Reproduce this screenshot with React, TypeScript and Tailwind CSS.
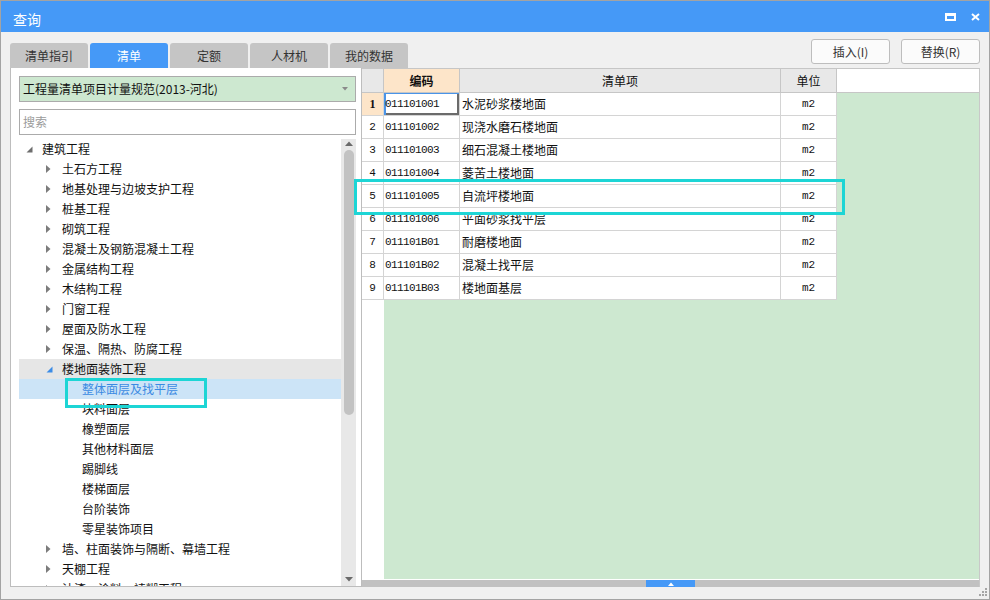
import React from "react";

const CJK = '"Noto Sans CJK SC", "Liberation Sans", sans-serif';
const MONO = '"Liberation Mono", "Noto Sans CJK SC", monospace';

type Node = { l: number; t: string; s?: "exp" | "col" | "expBlue"; sel?: boolean; hover?: boolean };

const tree: Node[] = [
  { l: 0, t: "建筑工程", s: "exp" },
  { l: 1, t: "土石方工程", s: "col" },
  { l: 1, t: "地基处理与边坡支护工程", s: "col" },
  { l: 1, t: "桩基工程", s: "col" },
  { l: 1, t: "砌筑工程", s: "col" },
  { l: 1, t: "混凝土及钢筋混凝土工程", s: "col" },
  { l: 1, t: "金属结构工程", s: "col" },
  { l: 1, t: "木结构工程", s: "col" },
  { l: 1, t: "门窗工程", s: "col" },
  { l: 1, t: "屋面及防水工程", s: "col" },
  { l: 1, t: "保温、隔热、防腐工程", s: "col" },
  { l: 1, t: "楼地面装饰工程", s: "expBlue", hover: true },
  { l: 2, t: "整体面层及找平层", sel: true },
  { l: 2, t: "块料面层" },
  { l: 2, t: "橡塑面层" },
  { l: 2, t: "其他材料面层" },
  { l: 2, t: "踢脚线" },
  { l: 2, t: "楼梯面层" },
  { l: 2, t: "台阶装饰" },
  { l: 2, t: "零星装饰项目" },
  { l: 1, t: "墙、柱面装饰与隔断、幕墙工程", s: "col" },
  { l: 1, t: "天棚工程", s: "col" },
  { l: 1, t: "油漆、涂料、裱糊工程", s: "col" },
];

const rows = [
  ["1", "011101001", "水泥砂浆楼地面"],
  ["2", "011101002", "现浇水磨石楼地面"],
  ["3", "011101003", "细石混凝土楼地面"],
  ["4", "011101004", "菱苦土楼地面"],
  ["5", "011101005", "自流坪楼地面"],
  ["6", "011101006", "平面砂浆找平层"],
  ["7", "011101B01", "耐磨楼地面"],
  ["8", "011101B02", "混凝土找平层"],
  ["9", "011101B03", "楼地面基层"],
];

function Tri({ s }: { s?: Node["s"] }) {
  if (s === "col")
    return (
      <svg width="5" height="8" viewBox="0 0 5 8" className="block">
        <path d="M0 0 L4.5 4 L0 8 Z" fill="#7c7c7c" />
      </svg>
    );
  if (s === "exp" || s === "expBlue")
    return (
      <svg width="7" height="7" viewBox="0 0 7 7" className="block mt-[1px]">
        <path d="M6.5 0.5 L6.5 6.5 L0.5 6.5 Z" fill={s === "exp" ? "#6e6e6e" : "#3c8ce6"} />
      </svg>
    );
  return null;
}

export default function App() {
  const tabs = ["清单指引", "清单", "定额", "人材机", "我的数据"];
  return (
    <div
      className="relative w-[990px] h-[600px] border border-[#a3a3a3] bg-[#f0f0f0] flex flex-col overflow-hidden"
      style={{ fontFamily: CJK }}
    >
      {/* title bar */}
      <div className="h-[31px] shrink-0 bg-[#4599f7] flex items-center pl-[12px] pr-[9px] text-white">
        <span className="text-[14px] leading-none mt-[4px]">查询</span>
        <div className="ml-auto flex items-center gap-[15px] mt-[1px]">
          <div className="w-[11px] h-[8px] border-2 border-t-[3px] border-white" />
          <svg width="9" height="8" viewBox="0 0 9 8" className="block">
            <path d="M1 1 L8 7 M8 1 L1 7" stroke="#fff" strokeWidth="2" />
          </svg>
        </div>
      </div>

      {/* tabs row */}
      <div className="h-[36px] shrink-0 flex items-end pl-[9px] pr-[9px]">
        <div className="flex gap-[2px]">
          {tabs.map((t, i) => (
            <div
              key={t}
              className={
                "w-[78px] h-[25px] rounded-t-[3px] flex items-center justify-center text-[12px] " +
                (i === 1 ? "bg-[#4599f7] text-white" : "bg-[#c5c5c5] text-[#333]")
              }
            >
              {t}
            </div>
          ))}
        </div>
        <div className="ml-auto self-start mt-[7px] flex gap-[11px]">
          {["插入(I)", "替换(R)"].map((b) => (
            <div
              key={b}
              className="w-[79px] h-[25px] rounded-[3px] border border-[#bdbdbd] bg-[#fbfbfb] flex items-center justify-center text-[12px] text-[#333]"
            >
              {b}
            </div>
          ))}
        </div>
      </div>

      {/* content */}
      <div className="h-[519px] shrink-0 flex pl-[9px]">
        {/* left panel */}
        <div className="w-[352px] h-full bg-white border-l border-r border-b border-[#bdbdbd] flex flex-col pt-[8px] pl-[8px] pr-[5px]">
          <div className="h-[26px] shrink-0 border border-[#ababab] bg-[#cde8d0] flex items-center pl-[3px] pr-[7px] text-[12px] text-[#111]">
            <span>工程量清单项目计量规范(2013-河北)</span>
            <svg width="6" height="4" viewBox="0 0 6 4" className="ml-auto block">
              <path d="M0 0 L6 0 L3 3.5 Z" fill="#8a8a8a" />
            </svg>
          </div>
          <div className="mt-[7px] h-[26px] shrink-0 border border-[#ababab] bg-white flex items-center pl-[3px] text-[12px] text-[#9b9b9b]">
            搜索
          </div>
          <div className="mt-[4px] flex-1 min-h-0 flex overflow-hidden">
            <div className="flex-1 min-w-0 flex flex-col">
              {tree.map((n, i) => (
                <div
                  key={i}
                  className={
                    "h-[20px] shrink-0 flex items-center text-[12px] whitespace-nowrap " +
                    (n.sel ? "bg-[#cce4f7] text-[#3a8ae2]" : n.hover ? "bg-[#e6e6e6] text-[#111]" : "text-[#111]")
                  }
                  style={{ paddingLeft: 7 + n.l * 20 }}
                >
                  <div className="w-[16px] shrink-0 flex items-center">
                    <Tri s={n.s} />
                  </div>
                  <span>{n.t}</span>
                </div>
              ))}
            </div>
            <div className="w-[15px] shrink-0 bg-[#e8e8e8] flex flex-col items-center pt-[2px] pb-[4px]">
              <svg width="8" height="5" viewBox="0 0 8 5" className="block">
                <path d="M0 5 L4 0.5 L8 5 Z" fill="#6a6a6a" />
              </svg>
              <div className="mt-[4px] w-[10px] h-[265px] rounded-full bg-[#c2c2c2]" />
              <svg width="8" height="5" viewBox="0 0 8 5" className="block mt-auto">
                <path d="M0 0 L8 0 L4 4.5 Z" fill="#6a6a6a" />
              </svg>
            </div>
          </div>
        </div>

        {/* right panel */}
        <div className="w-[618px] h-full border-r border-[#c8c8c8] flex flex-col">
          <div className="h-[25px] shrink-0 border-t border-b border-[#c6c6c6] bg-white flex text-[12px] text-[#111]">
            <div className="w-[22px] bg-[#e8e8e8] border-r border-[#c6c6c6]" />
            <div className="w-[76px] bg-[#fde5c9] border-r border-[#c6c6c6] flex items-center justify-center font-bold">编码</div>
            <div className="w-[321px] bg-[#e8e8e8] border-r border-[#c6c6c6] flex items-center justify-center">清单项</div>
            <div className="w-[56px] bg-[#e8e8e8] border-r border-[#c6c6c6] flex items-center justify-center">单位</div>
          </div>
          <div className="flex-1 min-h-0 flex flex-col bg-[#cde8d0]">
            {rows.map((r, i) => (
              <div key={r[0]} className="w-[475px] h-[23px] shrink-0 bg-white border-b border-[#d4d4d4] flex text-[#111]">
                <div
                  className={
                    "w-[22px] border-r border-[#d4d4d4] flex items-center justify-center " +
                    (i === 0 ? "bg-[#fde5c9] font-bold text-[12px]" : "text-[11px]")
                  }
                  style={{ fontFamily: i === 0 ? '"Liberation Serif", serif' : MONO }}
                >
                  {r[0]}
                </div>
                <div
                  className={
                    "w-[76px] border-r border-[#d4d4d4] flex items-center pl-[1px] text-[11px] tracking-[-0.6px] " +
                    (i === 0 ? "shadow-[inset_2px_1px_0_#4a94e8,inset_-2px_-2px_0_#6b6b6b]" : "")
                  }
                  style={{ fontFamily: MONO }}
                >
                  {r[1]}
                </div>
                <div className="w-[321px] border-r border-[#d4d4d4] flex items-center pl-[2px] text-[12px]">{r[2]}</div>
                <div
                  className="w-[56px] border-r border-[#d4d4d4] flex items-center justify-center text-[11px]"
                  style={{ fontFamily: MONO }}
                >
                  m2
                </div>
              </div>
            ))}
            <div className="flex-1 flex">
              <div className="w-[22px] bg-white" />
              <div className="flex-1" />
            </div>
          </div>
          <div className="h-[1px] shrink-0 bg-white" />
          <div className="h-[7px] shrink-0 bg-[#c1c1c1] flex pl-[284px]">
            <div className="w-[49px] h-full bg-[#4599f7] flex items-center justify-center">
              <svg width="6" height="4" viewBox="0 0 6 4" className="block">
                <path d="M0 4 L3 0.5 L6 4 Z" fill="#fff" />
              </svg>
            </div>
          </div>
        </div>
      </div>

      <div className="flex-1" />

      {/* resize grip */}
      <svg width="9" height="9" viewBox="0 0 9 9" className="absolute right-[1px] bottom-[2px] block">
        <rect x="6" y="0" width="2" height="2" fill="#a5a5a5" />
        <rect x="3" y="3" width="2" height="2" fill="#a5a5a5" />
        <rect x="6" y="3" width="2" height="2" fill="#a5a5a5" />
        <rect x="0" y="6" width="2" height="2" fill="#a5a5a5" />
        <rect x="3" y="6" width="2" height="2" fill="#a5a5a5" />
        <rect x="6" y="6" width="2" height="2" fill="#a5a5a5" />
      </svg>

      {/* annotation overlays */}
      <div className="absolute left-[353px] top-[178px] w-[491px] h-[36px] border-[3px] border-[#1dd5d5] pointer-events-none" />
      <div className="absolute left-[64px] top-[377px] w-[142px] h-[30px] border-[3px] border-[#1dd5d5] pointer-events-none" />
    </div>
  );
}
